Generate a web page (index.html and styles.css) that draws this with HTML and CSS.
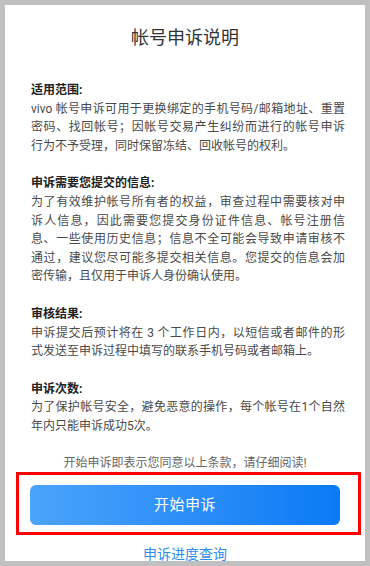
FILE: index.html
```html
<!DOCTYPE html>
<html lang="zh-CN">
<head>
<meta charset="utf-8">
<title>帐号申诉说明</title>
<link rel="stylesheet" href="styles.css">
</head>
<body>
<div class="frame">
  <main class="page">
    <h1 class="title">帐号申诉说明</h1>

    <section class="sec first">
      <h2 class="sec-h">适用范围:</h2>
      <p class="txt">
        <span class="ln">vivo 帐号申诉可用于更换绑定的手机号码/邮箱地址、重置</span>
        <span class="ln">密码、找回帐号；因帐号交易产生纠纷而进行的帐号申诉</span>
        <span class="last">行为不予受理，同时保留冻结、回收帐号的权利。</span>
      </p>
    </section>

    <section class="sec">
      <h2 class="sec-h">申诉需要您提交的信息:</h2>
      <p class="txt">
        <span class="ln">为了有效维护帐号所有者的权益，审查过程中需要核对申</span>
        <span class="ln">诉人信息，因此需要您提交身份证件信息、帐号注册信</span>
        <span class="ln">息、一些使用历史信息；信息不全可能会导致申请审核不</span>
        <span class="ln">通过，建议您尽可能多提交相关信息。您提交的信息会加</span>
        <span class="last">密传输，且仅用于申诉人身份确认使用。</span>
      </p>
    </section>

    <section class="sec">
      <h2 class="sec-h">审核结果:</h2>
      <p class="txt">
        <span class="ln">申诉提交后预计将在 3 个工作日内，以短信或者邮件的形</span>
        <span class="last">式发送至申诉过程中填写的联系手机号码或者邮箱上。</span>
      </p>
    </section>

    <section class="sec">
      <h2 class="sec-h">申诉次数:</h2>
      <p class="txt">
        <span class="ln">为了保护帐号安全，避免恶意的操作，每个帐号在1个自然</span>
        <span class="last">年内只能申诉成功5次。</span>
      </p>
    </section>

    <p class="note">开始申诉即表示您同意以上条款，请仔细阅读!</p>

    <div class="mark">
      <button class="btn" type="button">开始申诉</button>
    </div>

    <a class="link" href="#">申诉进度查询</a>
  </main>
</div>
</body>
</html>
```

FILE: styles.css
```css
* { box-sizing: border-box; }

html, body {
  margin: 0;
  padding: 0;
  background: #c0c0c0;
}

body {
  font-family: Roboto, "Noto Sans CJK SC", "Noto Sans", sans-serif;
}

.frame {
  width: 370px;
  height: 566px;
  padding: 5px;
  background: #c0c0c0;
}

.page {
  width: 360px;
  height: 556px;
  background: #ffffff;
  overflow: hidden;
  display: flex;
  flex-direction: column;
  padding-top: 21px;
}

.title {
  margin: 0;
  font-size: 18px;
  line-height: 24px;
  font-weight: 400;
  color: #333333;
  text-align: center;
}

.sec {
  margin: 19px 20px 0 26px;
}

.sec.first {
  margin-top: 31px;
}

.sec-h {
  margin: 0;
  font-size: 12px;
  line-height: 18.6px;
  font-weight: 700;
  color: #222222;
}

.txt {
  margin: 0;
  font-size: 12px;
  line-height: 18.6px;
  color: #4a4a4a;
}

.ln {
  display: block;
  text-align: justify;
  text-align-last: justify;
  white-space: nowrap;
}

.last {
  display: block;
  white-space: nowrap;
}

.note {
  margin: 18px 0 0;
  font-size: 12px;
  line-height: 18px;
  color: #666666;
  text-align: center;
}

.mark {
  margin: 0 4px 0 11px;
  border: 3px solid #ff0000;
  padding: 10px 18px 7px 11px;
}

.btn {
  display: block;
  width: 100%;
  height: 40px;
  border: none;
  border-radius: 6px;
  background: linear-gradient(90deg, #4ba4fb 0%, #2d8ef8 50%, #0a7af5 100%);
  color: #ffffff;
  font-family: inherit;
  font-size: 15px;
  line-height: 40px;
  padding: 0;
  letter-spacing: 0.5px;
}

.link {
  display: block;
  margin-top: 9px;
  font-size: 14px;
  line-height: 20px;
  color: #2f8ceb;
  text-align: center;
  text-decoration: none;
}
```
